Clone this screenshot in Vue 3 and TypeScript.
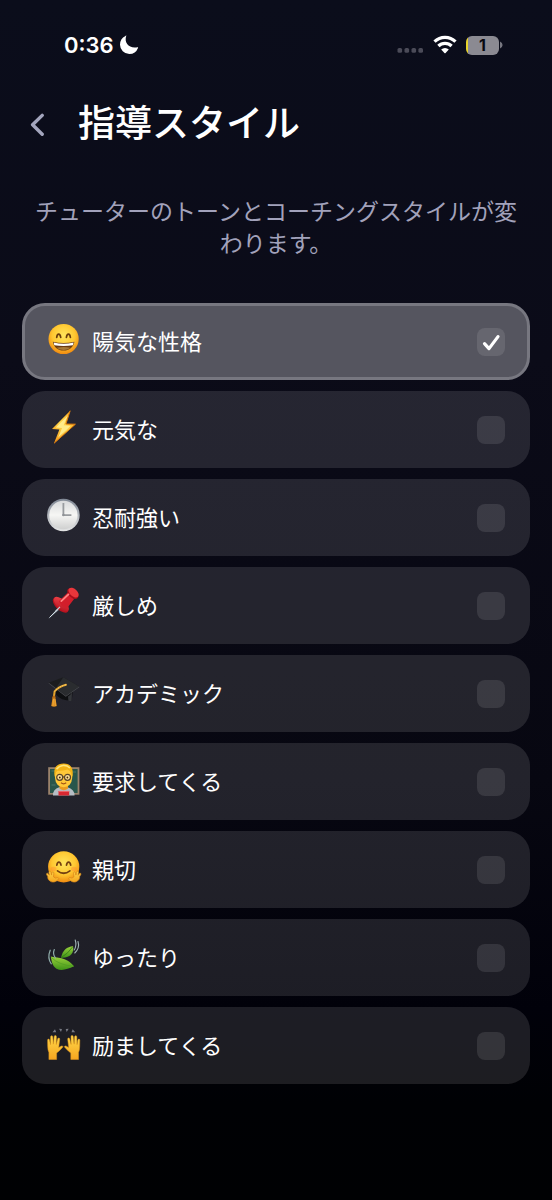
<script setup lang="ts">
import { ref } from 'vue'

interface StyleOption {
  id: string
  label: string
}

const options: StyleOption[] = [
  { id: 'cheerful', label: '陽気な性格' },
  { id: 'energetic', label: '元気な' },
  { id: 'patient', label: '忍耐強い' },
  { id: 'strict', label: '厳しめ' },
  { id: 'academic', label: 'アカデミック' },
  { id: 'demanding', label: '要求してくる' },
  { id: 'kind', label: '親切' },
  { id: 'relaxed', label: 'ゆったり' },
  { id: 'encouraging', label: '励ましてくる' },
]

const selected = ref<string[]>(['cheerful'])
</script>

<template>
  <div class="screen">
    <div class="status">
      <div class="status-left">
        <span class="time">0:36</span>
        <svg class="moon" viewBox="0 0 20 20" aria-hidden="true">
          <path d="M7.300.8C4.600 7.800 10.500 14 18.400 12.200c.6-.1.9.2.6.7A9.600 9.600 0 0 1 10.300 19 9.400 9.400 0 0 1 1 9.700 9.700 9.700 0 0 1 6.500.9c.5-.3 1-.4.8-.1Z" fill="#fff" />
        </svg>
      </div>
      <div class="status-right">
        <svg class="dots" viewBox="0 0 27 20" aria-hidden="true">
          <g fill="#4b4b58">
            <rect x="0.500" y="13" width="4.600" height="4.800" rx="1.600" />
            <rect x="7.500" y="13" width="4.600" height="4.800" rx="1.600" />
            <rect x="14.500" y="13" width="4.600" height="4.800" rx="1.600" />
            <rect x="21.400" y="13" width="4.600" height="4.800" rx="1.600" />
          </g>
        </svg>
        <svg class="wifi" viewBox="0 0 24 20" aria-hidden="true">
          <g fill="none" stroke="#fff" stroke-width="3.200">
            <path d="M1.500 6.600a15 15 0 0 1 21 0" />
            <path d="M5.400 11a9.400 9.400 0 0 1 13.200 0" />
          </g>
          <path d="M8.200 14.600a5.400 5.400 0 0 1 7.600 0L12.600 18q-.6.5-1.200 0Z" fill="#fff" />
        </svg>
        <div class="battery">
          <span class="battery-cell">1</span>
          <svg class="battery-tip" viewBox="0 0 3 8" aria-hidden="true">
            <path d="M0 .5Q2.600 1.800 2.600 4T0 7.500Z" fill="#777780" />
          </svg>
        </div>
      </div>
    </div>

    <header class="header">
      <button class="back" type="button" aria-label="戻る">
        <svg viewBox="0 0 16 24" aria-hidden="true">
          <path d="M12.200 3.400 2.600 12.800l9.600 9.400" fill="none" stroke="#a3a5bd" stroke-width="3.400" stroke-linecap="round" stroke-linejoin="round" />
        </svg>
      </button>
      <h1>指導スタイル</h1>
    </header>

    <p class="intro">チューターのトーンとコーチングスタイルが変わります。</p>

    <main class="list">
      <label v-for="o in options" :key="o.id" class="card" :class="{ active: selected.includes(o.id) }">
        <svg class="emoji" viewBox="0 0 36 40" aria-hidden="true">
          <defs>
            <radialGradient id="skin" cx="50%" cy="38%" r="62%">
              <stop offset="0" stop-color="#ffe55c" />
              <stop offset=".6" stop-color="#ffc831" />
              <stop offset="1" stop-color="#f08a10" />
            </radialGradient>
            <linearGradient id="gold" x1="1" y1="0" x2="0" y2="1">
              <stop offset="0" stop-color="#f79a16" />
              <stop offset=".5" stop-color="#ffd84c" />
              <stop offset="1" stop-color="#ef8a10" />
            </linearGradient>
            <linearGradient id="dial" x1="0" y1="0" x2="0" y2="1">
              <stop offset="0" stop-color="#d9dadc" />
              <stop offset=".5" stop-color="#f6f6f4" />
              <stop offset="1" stop-color="#cfd0d0" />
            </linearGradient>
            <linearGradient id="rim" x1="0" y1="0" x2="0" y2="1">
              <stop offset="0" stop-color="#7f8794" />
              <stop offset="1" stop-color="#e4e5e5" />
            </linearGradient>
            <linearGradient id="red" x1="0" y1="0" x2="1" y2="1">
              <stop offset="0" stop-color="#f4474b" />
              <stop offset="1" stop-color="#b3101f" />
            </linearGradient>
            <linearGradient id="leaf" x1="0" y1="0" x2="0" y2="1">
              <stop offset="0" stop-color="#9ad23c" />
              <stop offset="1" stop-color="#3f9418" />
            </linearGradient>
            <linearGradient id="palm" x1="0" y1="0" x2="0" y2="1">
              <stop offset="0" stop-color="#ffd84a" />
              <stop offset="1" stop-color="#f5a51f" />
            </linearGradient>
          </defs>

          <g v-if="o.id === 'cheerful'">
            <circle cx="17.600" cy="17" r="15.100" fill="url(#skin)" />
            <g fill="none" stroke="#6b3d0c" stroke-width="1.700" stroke-linecap="round">
              <path d="M10.700 15.400c.5-4.400 3.400-4.400 4 0" />
              <path d="M20.400 15.400c.6-4.400 3.500-4.400 4 0" />
            </g>
            <path d="M6.800 19.800q10.800 2.600 21.600 0C27.400 25.500 23.200 28.600 17.600 28.600S7.800 25.500 6.800 19.800Z" fill="#6a3a10" />
            <path d="M7.600 20.600q10 2.400 20 0l-.7 2.700q-9.300 1.600-18.600 0Z" fill="#fff" />
            <path d="M10.500 25.700q7.100-1.500 14.200 0-3 2.300-7.100 2.300t-7.100-2.300Z" fill="#a87a3a" />
          </g>

          <g v-else-if="o.id === 'energetic'">
            <path d="M24.200.7 6 19l7.400.4L8 33.300 29.400 14.200l-9.500-.2Z" fill="url(#gold)" />
            <path d="M22 5.200 9.800 17.500l6.300.4-3.900 9.700L24.800 15.800l-7.200-.5Z" fill="#ffeb8a" />
            <path d="M24.200.7 19.900 14l9.500.2L8 33.300" fill="none" stroke="#e07c0c" stroke-width="1" />
          </g>

          <g v-else-if="o.id === 'patient'">
            <circle cx="17.400" cy="17" r="16.300" fill="url(#rim)" />
            <circle cx="17.400" cy="17" r="14.200" fill="url(#dial)" />
            <path d="M17.400 5v12.200h8" fill="none" stroke="#989b9f" stroke-width="1.800" />
            <circle cx="17.400" cy="17" r="1.200" fill="#8f9296" />
          </g>

          <g v-else-if="o.id === 'strict'">
            <path d="M2 33.200 14.700 19l1.800 1.700Z" fill="#8c98a3" />
            <path d="M3.500 31.500 15 19.800" stroke="#d7e4ea" stroke-width="1" />
            <ellipse cx="14.700" cy="19" rx="9.800" ry="5" transform="rotate(43 14.700 19)" fill="#b9131f" />
            <ellipse cx="15.300" cy="18.100" rx="9.400" ry="4.500" transform="rotate(43 15.300 18.100)" fill="url(#red)" />
            <path d="m12.800 15.200 9-8.800 6.300 6.500-7.300 9.500q-5.300-2-8-7.200Z" fill="#d21e2b" />
            <ellipse cx="26.800" cy="7.600" rx="6.600" ry="4.100" transform="rotate(43 26.800 7.600)" fill="#a90e1b" />
            <ellipse cx="27.600" cy="6.600" rx="6" ry="3.700" transform="rotate(43 27.600 6.600)" fill="#e9363b" />
            <path d="m15.300 15.200 7.200-6.800" stroke="#ff8583" stroke-width="1.700" stroke-linecap="round" />
            <path d="M14 20.800 9.500 25.300" stroke="#c9d3da" stroke-width="1.200" />
          </g>

          <g v-else-if="o.id === 'academic'">
            <path d="M10 14v6.500q4.800 6.300 15.700 6.200l1-9Z" fill="#0e0f11" />
            <path d="M22 22.500q2.500-1.500 4-4l-.3 8.200q-1.700.6-3.300 0Z" fill="#34363a" />
            <path d="m2.700 8.800 14.600-5.600 16 9.300-13.500 9.300Z" fill="#1b1c1e" />
            <path d="m17.300 3.200 16 9.300-13.500 9.300L10 14.100Z" fill="#2a2c2f" />
            <path d="m2.700 8.800 17.100 13 13.500-9.300v.8L19.800 22.800 2.700 9.600Z" fill="#4a4c50" />
            <path d="M20 10.700q-7.500 2-11.400 6.700l-.9 7" fill="none" stroke="#e3a32c" stroke-width="2" stroke-linecap="round" />
            <path d="M20 10.700q-7.500 2-11.400 6.700" fill="none" stroke="#ffe083" stroke-width=".8" stroke-dasharray="1.500 1" />
            <path d="M6.700 23h2.500l1.600 9q-2.800 1.500-5.600 0Z" fill="#dc8b1c" />
            <path d="M7.500 25 7 32m2-7 .3 7" stroke="#f6ba4f" stroke-width=".6" />
            <circle cx="8" cy="23" r="1.500" fill="#ba6c12" />
          </g>

          <g v-else-if="o.id === 'demanding'">
            <path d="M2.200 5.200h31.200v27.500H2.200Z" fill="#9a826b" />
            <path d="M4 7h27.600v24H4Z" fill="#28564b" />
            <path d="M5.500 9h5M26 10h4M5.500 23h4" stroke="#527c6e" stroke-width=".8" />
            <path d="M7 33.500q-.2-6.500 6.200-8.200l9 .1q6.200 1.700 6.400 8.100Z" fill="#b6bdc4" />
            <path d="M13.500 22h8.500v4.500q-4.300 3.500-8.500 0Z" fill="#e99b20" />
            <path d="M9 12c0-13 17.200-13 17.200 0v4q-.7 8.800-8.600 9.200Q9.700 24.800 9 16Z" fill="#ffc839" />
            <path d="M8.700 15C7 5 11 1.700 17.600 1.600S28 5.500 26.500 15l-1-2.500q-1-4.200-4.200-5.100-5.800 2-9.800 1.200-1.800 1.700-2.100 4Z" fill="#f3b315" />
            <path d="M10.500 7.300C14 2.500 20 2.200 24 6" fill="none" stroke="#ffe67a" stroke-width="1.600" />
            <g fill="#ffe29a" stroke="#5b4428" stroke-width="1.200">
              <circle cx="13.700" cy="15.300" r="3" />
              <circle cx="21.500" cy="15.300" r="3" />
            </g>
            <path d="M16.700 15h1.800" stroke="#5b4428" stroke-width="1.200" />
            <circle cx="13.800" cy="15.500" r=".9" fill="#4a2d0b" />
            <circle cx="21.400" cy="15.500" r=".9" fill="#4a2d0b" />
            <path d="M15 20.800q2.600 2 5.200 0" fill="none" stroke="#a15214" stroke-width="1.200" />
            <path d="M12.500 29h10.700v4.500H12.500Z" fill="#d92831" />
            <path d="M12.500 29.400h10.700" stroke="#f06a6d" stroke-width="1" />
          </g>

          <g v-else-if="o.id === 'kind'">
            <circle cx="17.700" cy="16.800" r="15.600" fill="url(#skin)" />
            <ellipse cx="7.500" cy="19" rx="3" ry="2.200" fill="#ff8833" opacity=".4" />
            <ellipse cx="28" cy="19" rx="3" ry="2.200" fill="#ff8833" opacity=".4" />
            <g fill="none" stroke="#744011" stroke-width="1.700" stroke-linecap="round">
              <path d="M10.800 15.200c.7-4 3.500-4 4.200 0" />
              <path d="M20.500 15.200c.7-4 3.500-4 4.200 0" />
              <path d="M11.500 20.800q6.200 4.900 12.400 0" />
            </g>
            <g fill="url(#palm)" stroke="#d9861a" stroke-width=".7" stroke-linejoin="round">
              <path d="M5.500 31.800c-2.700-1-4-3-3.700-5.200L.7 24.800c-.8-1.500.8-2.200 1.600-1l1 1.400-.4-2.800c-.1-1.700 1.700-1.700 2 0l.6 2.700.4-2.300c.3-1.500 2-1.100 1.900.3l-.3 3.800 2 1.200c2.800-1.300 4.400.4 2.400 1.800-2.200 1.700-3.900 2.600-6.400 1.900Z" />
              <path d="M29.900 31.800c2.700-1 4-3 3.700-5.200l1.100-1.800c.8-1.500-.8-2.200-1.600-1l-1 1.400.4-2.800c.1-1.700-1.700-1.700-2 0l-.6 2.700-.4-2.300c-.3-1.500-2-1.100-1.900.3l.3 3.800-2 1.200c-2.800-1.300-4.400.4-2.400 1.800 2.200 1.700 3.900 2.600 6.400 1.900Z" />
            </g>
          </g>

          <g v-else-if="o.id === 'relaxed'">
            <path d="M15 19.700C16.500 12.300 21 8.500 27 8.200c1.500 6.300-2.500 12-12 11.500Z" fill="url(#leaf)" />
            <path d="M16 19Q22 15.600 26.500 9" fill="none" stroke="#317916" stroke-width=".8" />
            <path d="M4.800 18.500c5.800 1.800 15.200-.3 23.200 9.800-6.500 3-12.500 5-17.500 2.400C6 28 5.700 23 4.800 18.500Z" fill="url(#leaf)" />
            <path d="M5.500 19.500q7 7.500 22.200 8.800" fill="none" stroke="#4f9c22" stroke-width=".7" />
            <g fill="none" stroke-linecap="round">
              <path d="M8.300 11.500Q6.400 16 9.500 20M4.200 12.200Q1 20 5.300 25.800" stroke="#8eaaa8" stroke-width="1.200" />
              <path d="M29.200 2Q31 7.500 28.200 12M32 3.500Q34 10 28.800 15" stroke="#a0b4b5" stroke-width="1.100" />
            </g>
          </g>

          <g v-else>
            <g fill="#777983">
              <path d="m6.500 6.300 2.500-3 1.200 3ZM13 2.800l3 .3-1 3ZM22.700 2.800l-3 .3 1 3ZM29.200 6.300l-2.500-3-1.200 3Z" />
            </g>
            <g fill="url(#palm)" stroke="#df951c" stroke-width=".5" stroke-linejoin="round">
              <path d="M2.900 33.500V26.500Q1.700 24 1.700 20.500l-.1-6.300c0-1.500 1.700-1.500 2 0l.8 4.500.2-7.800c0-1.600 2.100-1.600 2.200 0l.5 7.300.9-7.700c.2-1.500 2.200-1.400 2.200.1l-.1 7.900 1.400-5.700c.4-1.400 2.200-1 2 .4l-1 8.300 2.300-1.300c1.500-.9 2.600.3 1.500 1.300l-3.400 3.500-2.500 2v6.500Z" />
              <path d="M32.500 33.500V26.500q1.200-2.500 1.200-6l.1-6.300c0-1.500-1.700-1.500-2 0l-.8 4.500-.2-7.800c0-1.600-2.100-1.600-2.200 0l-.5 7.300-.9-7.700c-.2-1.500-2.200-1.400-2.200.1l.1 7.900-1.400-5.700c-.4-1.400-2.200-1-2 .4l1 8.300-2.300-1.300c-1.500-.9-2.600.3-1.500 1.300l3.400 3.500 2.500 2v6.500Z" />
            </g>
          </g>
        </svg>
        <span class="label">{{ o.label }}</span>
        <span class="check">
          <input v-model="selected" type="checkbox" :value="o.id" />
          <svg v-if="selected.includes(o.id)" class="tick" viewBox="0 0 28 28" aria-hidden="true">
            <path d="m7.500 15.600 4.500 5L21 8.600" fill="none" stroke="#fff" stroke-width="3.200" stroke-linecap="round" stroke-linejoin="round" />
          </svg>
        </span>
      </label>
    </main>
  </div>
</template>

<style>
html {
  background: #010106;
}
</style>

<style scoped>
.screen {
  box-sizing: border-box;
  min-height: 100vh;
  padding: 30px 22px;
  background: linear-gradient(180deg, #0b0d1b 0%, #0b0b18 30%, #070711 65%, #01010a 84%, #000104 92%, #000103 100%);
  color: #fff;
  font-family: Inter, "Noto Sans CJK JP", sans-serif;
}

.status {
  display: flex;
  align-items: center;
  justify-content: space-between;
  height: 30px;
  padding: 0 27px 0 42px;
}

.status-left,
.status-right,
.battery {
  display: flex;
  align-items: center;
}

.status-left {
  gap: 5px;
}

.time {
  font-size: 22px;
  font-weight: 600;
  line-height: 30px;
}

.moon {
  width: 20px;
  height: 20px;
}

.status-right {
  gap: 9px;
}

.dots {
  width: 27px;
  height: 20px;
}

.wifi {
  width: 24px;
  height: 20px;
}

.battery {
  gap: 1px;
}

.battery-cell {
  box-sizing: border-box;
  width: 33px;
  height: 19px;
  border-radius: 6px;
  background: linear-gradient(90deg, #e8d42c 2px, #8b8a92 2px);
  color: #08080f;
  font-size: 16px;
  font-weight: 700;
  line-height: 19px;
  text-align: center;
}

.battery-tip {
  width: 3px;
  height: 8px;
}

.header {
  display: flex;
  align-items: center;
  gap: 24px;
  margin-top: 36px;
}

.back {
  display: flex;
  padding: 4px 8px;
  border: 0;
  background: none;
  cursor: pointer;
}

.back svg {
  width: 16px;
  height: 24px;
}

h1 {
  margin: 0;
  font-size: 37px;
  font-weight: 500;
  line-height: 56px;
}

.intro {
  margin: 44px 10px 0;
  color: #a2a2bb;
  font-size: 23px;
  line-height: 32px;
  text-align: center;
}

.list {
  display: flex;
  flex-direction: column;
  gap: 11px;
  margin-top: 43px;
}

.card {
  box-sizing: border-box;
  display: flex;
  align-items: center;
  min-height: 77px;
  padding: 0 22px 0 21px;
  border: 3px solid transparent;
  border-radius: 23px;
  background: rgba(255, 255, 255, 0.115) border-box;
  cursor: pointer;
}

.card.active {
  border-color: #777780;
  background: #55555f;
}

.emoji {
  flex: none;
  width: 36px;
  height: 40px;
}

.label {
  flex: 1;
  margin-left: 10px;
  font-size: 22px;
  line-height: 32px;
}

.check {
  position: relative;
  display: flex;
  width: 28px;
  height: 28px;
}

.check input {
  width: 28px;
  height: 28px;
  margin: 0;
  appearance: none;
  border-radius: 8px;
  background: rgba(255, 255, 255, 0.1);
  cursor: pointer;
}

.tick {
  position: absolute;
  inset: 0;
  pointer-events: none;
}
</style>
